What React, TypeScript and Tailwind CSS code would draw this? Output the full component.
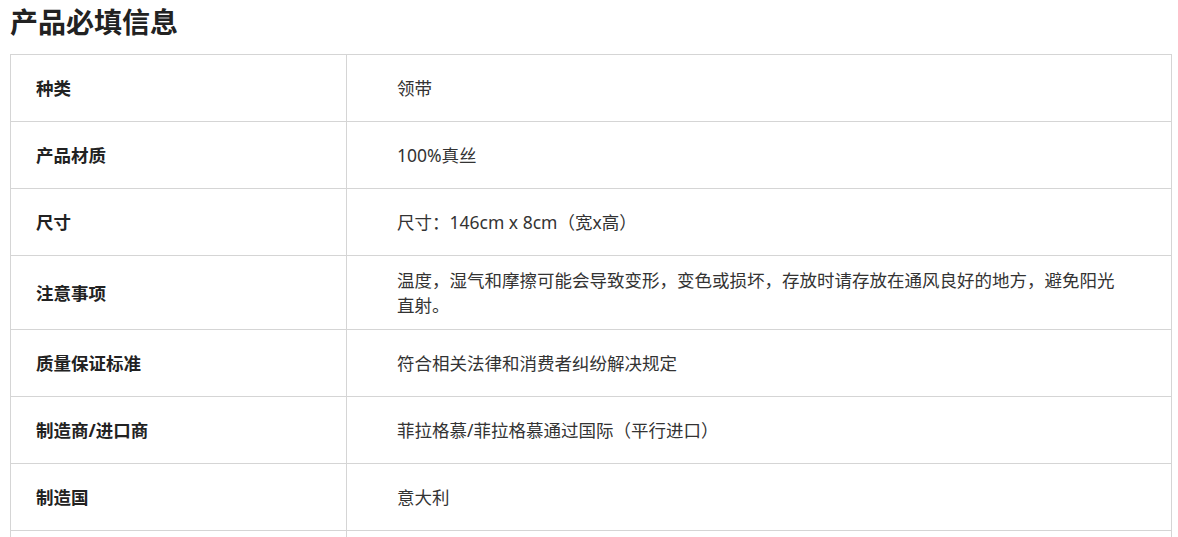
import React from "react";

const rows: { label: string; value: string }[] = [
  { label: "种类", value: "领带" },
  { label: "产品材质", value: "100%真丝" },
  { label: "尺寸", value: "尺寸：146cm x 8cm（宽x高）" },
  {
    label: "注意事项",
    value:
      "温度，湿气和摩擦可能会导致变形，变色或损坏，存放时请存放在通风良好的地方，避免阳光直射。",
  },
  { label: "质量保证标准", value: "符合相关法律和消费者纠纷解决规定" },
  { label: "制造商/进口商", value: "菲拉格慕/菲拉格慕通过国际（平行进口）" },
  { label: "制造国", value: "意大利" },
  { label: "", value: "" },
];

export default function App() {
  return (
    <div
      className="w-[1178px] h-[537px] overflow-hidden bg-white text-[#333]"
      style={{ fontFamily: '"Noto Sans", "Noto Sans CJK SC", sans-serif' }}
    >
      <h2 className="pl-[10px] text-[28px] leading-[44px] font-bold text-[#222] mb-[10px]">
        产品必填信息
      </h2>
      <div className="ml-[10px] w-[1162px] border-t border-l border-r border-[#d5d5d5]">
        {rows.map((r, i) => (
          <div key={i} className="flex min-h-[67px] border-b border-[#d5d5d5]">
            <div className="w-[336px] shrink-0 border-r border-[#d5d5d5] pl-[25px] pr-[20px] pt-[12px] pb-[11px] flex items-center text-[17.5px] leading-[25px] font-bold text-[#222]">
              {r.label}
            </div>
            <div className="flex-1 pl-[50px] pr-[50px] pt-[12px] pb-[11px] flex items-center text-[17.5px] leading-[25px]">
              {r.value}
            </div>
          </div>
        ))}
      </div>
    </div>
  );
}
